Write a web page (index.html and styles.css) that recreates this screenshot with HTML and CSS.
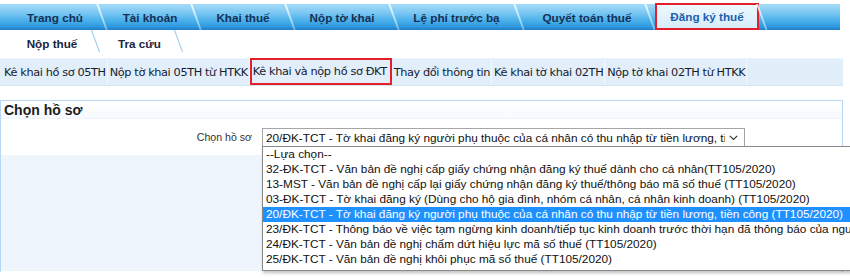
FILE: index.html
```html
<!DOCTYPE html>
<html lang="vi">
<head>
<meta charset="utf-8">
<title>Đăng ký thuế</title>
<link rel="stylesheet" href="styles.css">
</head>
<body>
<div class="page">
  <nav class="tabs">
    <a class="tab w1">Trang chủ</a>
    <a class="tab w2">Tài khoản</a>
    <a class="tab w3">Khai thuế</a>
    <a class="tab w4">Nộp tờ khai</a>
    <a class="tab w5">Lệ phí trước bạ</a>
    <a class="tab w6">Quyết toán thuế</a>
    <a class="tab active w7">Đăng ký thuế</a>
    <span class="tab-rest"></span>
  </nav>
  <nav class="subtabs">
    <a class="subtab s1">Nộp thuế</a>
    <a class="subtab s2">Tra cứu</a>
  </nav>
  <div class="menu">
    <a class="item first">Kê khai hồ sơ 05TH</a>
    <a class="item">Nộp tờ khai 05TH từ HTKK</a>
    <a class="item selected">Kê khai và nộp hồ sơ ĐKT</a>
    <a class="item">Thay đổi thông tin</a>
    <a class="item">Kê khai tờ khai 02TH</a>
    <a class="item">Nộp tờ khai 02TH từ HTKK</a>
  </div>
  <section class="panel">
    <h2 class="panel-title">Chọn hồ sơ</h2>
    <div class="row row-white">
      <label class="label">Chọn hồ sơ</label>
      <div class="select-wrap">
        <div class="select">
          <span class="select-text">20/ĐK-TCT - Tờ khai đăng ký người phụ thuộc của cá nhân có thu nhập từ tiền lương, ti</span>
          <svg class="chev" width="9" height="6" viewBox="0 0 9 6"><path d="M0.8 0.8 L4.5 4.5 L8.2 0.8" fill="none" stroke="#333" stroke-width="1.1"/></svg>
        </div>
        <ul class="options">
          <li>--Lựa chọn--</li>
          <li>32-ĐK-TCT - Văn bản đề nghị cấp giấy chứng nhận đăng ký thuế dành cho cá nhân(TT105/2020)</li>
          <li>13-MST - Văn bản đề nghị cấp lại giấy chứng nhận đăng ký thuế/thông báo mã số thuế (TT105/2020)</li>
          <li>03-ĐK-TCT - Tờ khai đăng ký (Dùng cho hộ gia đình, nhóm cá nhân, cá nhân kinh doanh) (TT105/2020)</li>
          <li class="opt-sel">20/ĐK-TCT - Tờ khai đăng ký người phụ thuộc của cá nhân có thu nhập từ tiền lương, tiền công (TT105/2020)</li>
          <li>23/ĐK-TCT - Thông báo về việc tạm ngừng kinh doanh/tiếp tục kinh doanh trước thời hạn đã thông báo của người nộp thuế</li>
          <li>24/ĐK-TCT - Văn bản đề nghị chấm dứt hiệu lực mã số thuế (TT105/2020)</li>
          <li>25/ĐK-TCT - Văn bản đề nghị khôi phục mã số thuế (TT105/2020)</li>
        </ul>
      </div>
    </div>
    <div class="row row-blue"></div>
  </section>
</div>
</body>
</html>
```
FILE: styles.css
```css
* { box-sizing: border-box; }
html, body { margin: 0; padding: 0; background: #fff; overflow: hidden; }
body { width: 850px; height: 278px; font-family: "Liberation Sans", Arial, sans-serif; }
.page { width: 850px; height: 278px; overflow: hidden; }

.tabs {
  display: flex;
  height: 26px;
  margin-top: 4px;
  width: 840px;
  background: linear-gradient(#a6dbf8 0%, #80c9f3 30%, #48afea 65%, #2e97de 88%, #1d7cc6 100%);
}
.tab {
  position: relative;
  display: flex;
  align-items: center;
  justify-content: center;
  height: 26px;
  font-weight: bold;
  font-size: 11.7px;
  color: #143056;
  text-decoration: none;
}
.tab::after {
  content: "";
  position: absolute;
  right: -1px;
  top: 0;
  width: 2px;
  height: 26px;
  background: linear-gradient(rgba(255,255,255,0.85), rgba(205,238,255,0.45));
  transform: skewX(20deg);
}
.w1 { width: 102px; padding-left: 8px; }
.w2 { width: 94px; padding-left: 2px; }
.w3 { width: 94px; }
.w4 { width: 104px; }
.w5 { width: 125px; }
.w6 { width: 136px; }
.tab.w6::after { right: 4px; }
.w7 { width: 104px; }
.tab.active {
  margin-top: -1px;
  height: 27px;
  background: linear-gradient(#eef8fe, #d5edfb);
  border: 2px solid #e3202a;
  color: #1d5fae;
}
.tab.active::after { right: -6px; top: -1px; height: 27px; }
.tab-rest { flex: 1; }

.subtabs {
  display: flex;
  height: 26px;
}
.subtab {
  position: relative;
  display: flex;
  align-items: center;
  justify-content: center;
  height: 26px;
  font-weight: bold;
  font-size: 11.7px;
  color: #1a2540;
}
.subtab::after {
  content: "";
  position: absolute;
  right: 0;
  top: 0;
  width: 1px;
  height: 22px;
  background: #8cc6ec;
  transform: skewX(20deg);
}
.s1 { width: 96px; padding-left: 8px; }
.s2 { width: 83px; padding-left: 4px; }

.menu {
  display: flex;
  height: 28px;
  width: 843px;
  margin-top: 2px;
  background: #e2effa;
  border-top: 1px solid #edf5fc;
  border-bottom: 1px solid #d2e4f4;
  font-family: "DejaVu Sans", Tahoma, sans-serif;
  font-size: 11.3px;
  letter-spacing: -0.38px;
  color: #15202e;
}
.item {
  display: flex;
  align-items: center;
  padding: 0 1px 0 2px;
  border-right: 1px solid #f2f8fd;
  white-space: nowrap;
}
.item.first { padding-left: 4px; }
.item.selected {
  border: 2px solid #e3202a;
  margin-top: -1px;
  height: 27px;
  padding: 0 3px 0 1px;
}

.panel {
  margin-top: 14px;
  width: 843px;
  height: 172px;
  border: 1px solid #b7d7f3;
  border-bottom: none;
}
.panel-title {
  margin: 0;
  height: 18px;
  padding: 1px 0 0 3px;
  font-size: 14px;
  font-weight: bold;
  color: #1c1c1c;
  background: linear-gradient(#fff, #f6fafe);
  border-bottom: 1px solid #eef4fb;
}
.row { display: flex; }
.row-white {
  height: 36px;
  background: #fff;
  align-items: flex-start;
  padding-top: 9px;
}
.row-blue {
  height: 116px;
  background: #eef5fc;
}
.label {
  width: 261px;
  padding-right: 10px;
  text-align: right;
  font-size: 10.6px;
  color: #333;
  padding-top: 3px;
}
.select-wrap { position: relative; }
.select {
  display: flex;
  align-items: center;
  width: 483px;
  height: 19px;
  border: 1px solid #a6a6a6;
  background: #fff;
  padding: 0 6px 0 3px;
  font-size: 11.8px;
  color: #111;
}
.select-text { flex: 1; white-space: nowrap; overflow: hidden; }
.chev { margin-left: 4px; }
.options {
  position: absolute;
  left: 0;
  top: 18px;
  width: 600px;
  margin: 0;
  padding: 0 0 3px 0;
  list-style: none;
  background: #fff;
  border: 1px solid #8a8a8a;
  box-shadow: 1px 2px 3px rgba(0,0,0,0.25);
  font-size: 11.8px;
  color: #111;
  z-index: 5;
}
.options li {
  height: 15px;
  line-height: 15px;
  padding-left: 3px;
  white-space: nowrap;
  overflow: hidden;
}
.options li.opt-sel {
  background: #1e90ff;
  color: #fff;
}
```
